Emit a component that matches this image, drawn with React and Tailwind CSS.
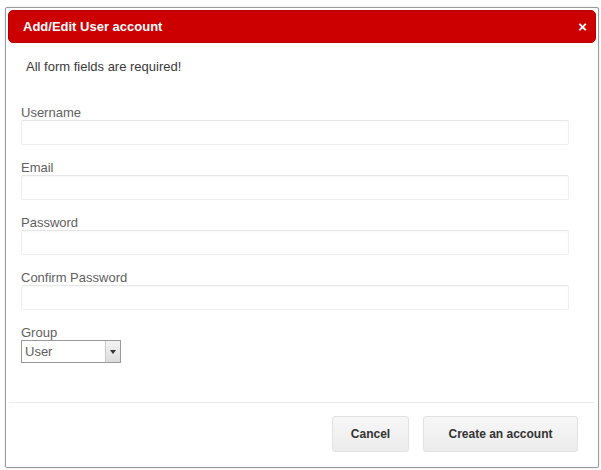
import React from 'react';

const fields = ['Username', 'Email', 'Password', 'Confirm Password'];

const Field = ({ label }) => {
    return (
        <div className="flex flex-col mb-[15px]">
            <label className="text-[13px] leading-[15px] text-[#606060]">{label}</label>
            <input
                type={label.includes('Password') ? 'password' : 'text'}
                className="h-[25px] w-[548px] border border-[#efefef] border-t-[#e6e6e6] rounded-[2px] shadow-[inset_0_1px_2px_rgba(0,0,0,0.03)] outline-none"
            />
        </div>
    );
};

const App = () => {
    return (
        <div className="min-h-[470px] bg-white pt-[7px] pl-[5px]" style={{ fontFamily: '"Liberation Sans", Arial, sans-serif' }}>
            <div className="w-[594px] h-[461px] border border-[#9a9a9a] rounded-[2px] bg-white p-[2px] flex flex-col shadow-[0_0_2px_rgba(0,0,0,0.15)]">
                {/* header */}
                <div className="h-[33px] rounded-[5px] bg-[#cc0000] border border-[#b80000] flex items-center justify-between pl-[14px] pr-[8px]">
                    <span className="text-white font-bold text-[13px]">Add/Edit User account</span>
                    <span className="text-white font-bold text-[15px] leading-none">×</span>
                </div>

                <div className="flex-1 flex flex-col">
                    <p className="text-[13px] leading-[16px] text-[#3a3a3a] pl-[18px] mt-[16px]">All form fields are required!</p>

                    <div className="pl-[13px] mt-[30px]">
                        {fields.map((f) => (
                            <Field key={f} label={f} />
                        ))}
                        <div className="flex flex-col">
                            <label className="text-[13px] leading-[15px] text-[#606060]">Group</label>
                            <div className="flex h-[23px] w-[100px] border border-[#9a9a9a] bg-white">
                                <span className="flex-1 text-[13px] leading-[21px] pl-[3px] text-[#606060]">User</span>
                                <span className="w-[15px] border-l border-[#c8c8c8] bg-gradient-to-b from-[#f4f4f4] to-[#dcdcdc] flex items-center justify-center">
                                    <svg width="6" height="4" viewBox="0 0 6 4">
                                        <path d="M0 0 L6 0 L3 4 Z" fill="#333" />
                                    </svg>
                                </span>
                            </div>
                        </div>
                    </div>
                </div>

                {/* footer */}
                <div className="border-t border-[#ececec] mx-[1px] flex justify-end gap-[14px] pt-[13px] pb-[13px] pr-[17px]">
                    <button className="w-[77px] h-[36px] rounded-[3px] border border-[#e2e2e2] bg-gradient-to-b from-[#f7f7f7] to-[#ececec] text-[12px] font-bold text-[#333]">
                        Cancel
                    </button>
                    <button className="w-[155px] h-[36px] rounded-[3px] border border-[#e2e2e2] bg-gradient-to-b from-[#f7f7f7] to-[#ececec] text-[12px] font-bold text-[#333]">
                        Create an account
                    </button>
                </div>
            </div>
        </div>
    );
};

export default App;
